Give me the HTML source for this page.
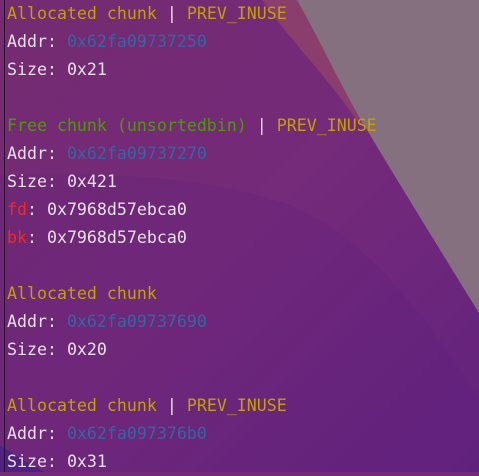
<!DOCTYPE html>
<html><head><style>
html,body{margin:0;padding:0}
body{width:479px;height:472px;overflow:hidden;position:relative;background:#742a78;}
svg{position:absolute;left:0;top:0}
.t{position:absolute;left:7px;top:0;font-family:"DejaVu Sans Mono","Liberation Mono",monospace;font-size:16.6px;line-height:28px;color:#e8e0e8;white-space:pre}
.y{color:#c4a000}.g{color:#4e9a06}.b{color:#3465a4}.r{color:#ef2929}
.bar{position:absolute;left:4px;top:0;width:1px;height:472px;background:#2a0f2c}
</style></head><body>
<svg width="479" height="472">
<defs><linearGradient id="bg" x1="0" y1="0" x2="1" y2="1"><stop offset="0" stop-color="#742b70"/><stop offset="0.5" stop-color="#752a7a"/><stop offset="1" stop-color="#62227e"/></linearGradient></defs>
<rect width="479" height="472" fill="url(#bg)"/>
<path d="M0 175 C120 170 220 180 290 205 C370 240 430 320 479 400 L479 472 L0 472 Z" fill="#5a1f7e" opacity="0.2"/>
<path d="M262 0 C290 40 330 80 360 125 L479 125 L479 0 Z" fill="#8a3e6e"/>
<path d="M297 0 C320 40 345 95 370 135 C400 185 440 250 479 313 L479 0 Z" fill="#84707f"/>
<path d="M0 445 C15 455 30 465 45 472 L0 472 Z" fill="#4e2182"/>
</svg>
<div class="bar"></div>
<div class="t"><span class="y">Allocated chunk</span> | <span class="y">PREV_INUSE</span>
Addr: <span class="b">0x62fa09737250</span>
Size: 0x21

<span class="g">Free chunk (unsortedbin)</span> | <span class="y">PREV_INUSE</span>
Addr: <span class="b">0x62fa09737270</span>
Size: 0x421
<span class="r">fd</span>: 0x7968d57ebca0
<span class="r">bk</span>: 0x7968d57ebca0

<span class="y">Allocated chunk</span>
Addr: <span class="b">0x62fa09737690</span>
Size: 0x20

<span class="y">Allocated chunk</span> | <span class="y">PREV_INUSE</span>
Addr: <span class="b">0x62fa097376b0</span>
Size: 0x31</div>
</body></html>
